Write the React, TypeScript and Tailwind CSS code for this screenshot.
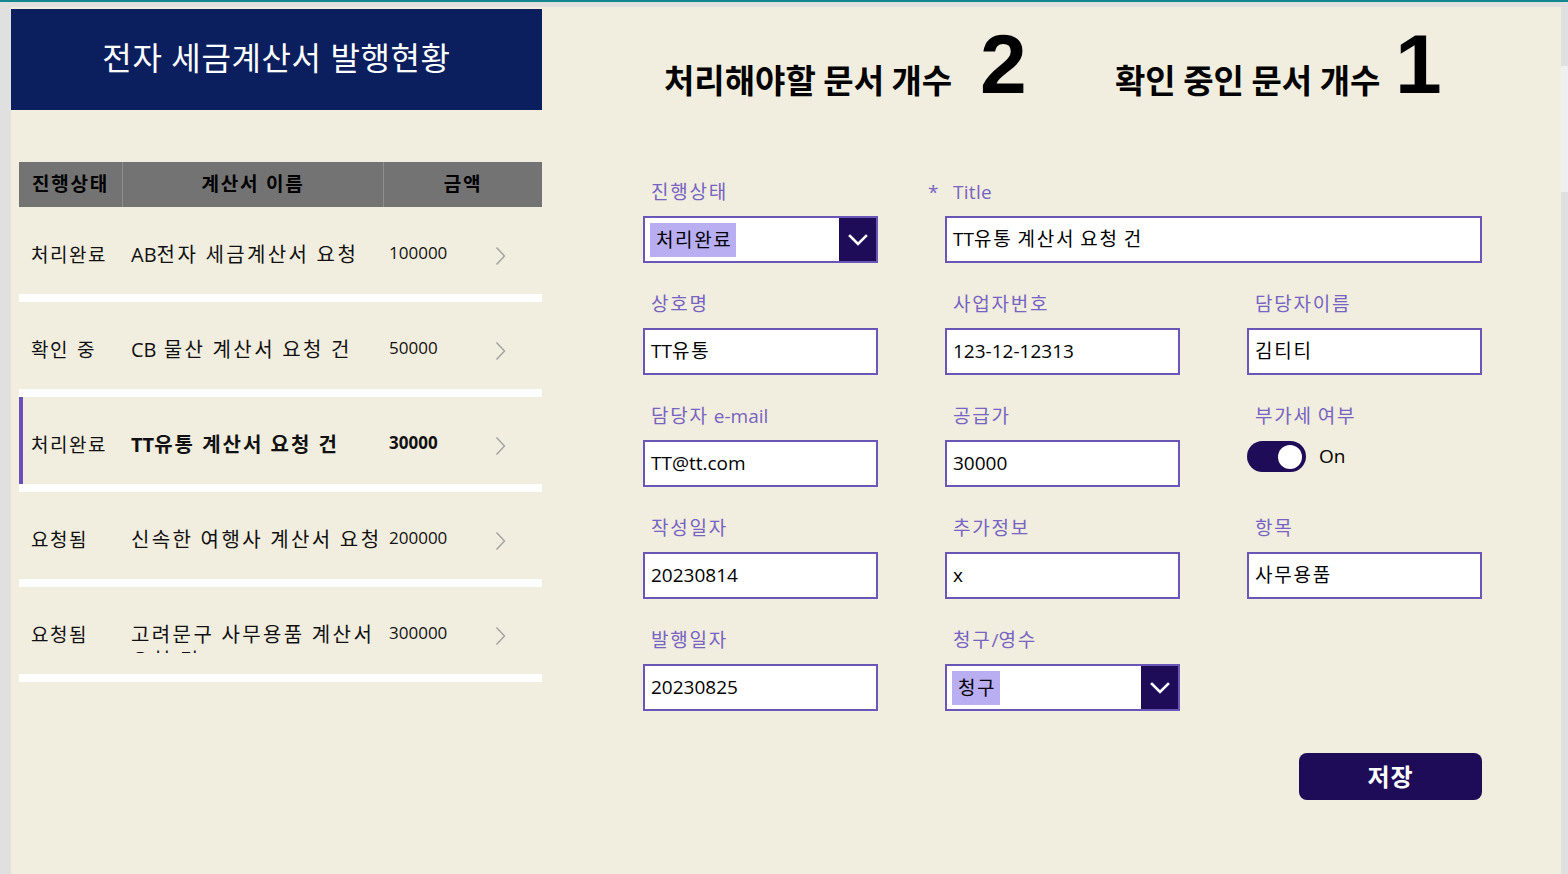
import React from "react";

const FONT = "font-['Open_Sans','Noto_Sans_CJK_KR',sans-serif]";

// Wraps Hangul runs in a span with the given (fully written) tracking class
function K({ text, k }: { text: string; k: string }) {
  const parts = text.split(/([\uAC00-\uD7A3]+)/);
  return (
    <span>
      {parts.map((p, i) =>
        /[\uAC00-\uD7A3]/.test(p) ? (
          <span key={i} className={k}>
            {p}
          </span>
        ) : (
          <React.Fragment key={i}>{p}</React.Fragment>
        )
      )}
    </span>
  );
}

function Chevron() {
  return (
    <svg width="11" height="20" viewBox="0 0 11 20" fill="none">
      <polyline points="1.5,1.5 9.5,10 1.5,18.5" stroke="#a0a0a0" strokeWidth="1.4" />
    </svg>
  );
}

function DownChevron() {
  return (
    <svg width="20" height="12" viewBox="0 0 20 12" fill="none">
      <polyline points="2,2 10,10 18,2" stroke="#ffffff" strokeWidth="2.6" strokeLinecap="square" />
    </svg>
  );
}

type Row = { status: string; name: string; amount: string; selected?: boolean };

const rows: Row[] = [
  { status: "처리완료", name: "AB전자 세금계산서 요청", amount: "100000" },
  { status: "확인 중", name: "CB 물산 계산서 요청 건", amount: "50000" },
  { status: "처리완료", name: "TT유통 계산서 요청 건", amount: "30000", selected: true },
  { status: "요청됨", name: "신속한 여행사 계산서 요청", amount: "200000" },
  { status: "요청됨", name: "고려문구 사무용품 계산서 요청 건", amount: "300000" },
];

function ListRow({ r }: { r: Row }) {
  return (
    <>
      <div
        className={
          "h-[87px] flex items-start pt-[35px] text-[#111] " +
          (r.selected ? "border-l-[4px] border-[#6a4fb8] pl-[8px]" : "pl-[12px]")
        }
      >
        <div className="w-[100px] shrink-0 whitespace-nowrap text-[19px] leading-[26px] [word-spacing:3px]">
          <K text={r.status} k="tracking-[1.5px]" />
        </div>
        <div
          className={
            "w-[258px] shrink-0 h-[31px] overflow-hidden text-[20px] leading-[26px] [word-spacing:2px] " +
            (r.selected ? "font-bold" : "")
          }
        >
          <K text={r.name} k={r.selected ? "tracking-[2px]" : "tracking-[2.4px]"} />
        </div>
        <div className={"w-[106px] shrink-0 text-[17px] leading-[26px] -mt-[2px] " + (r.selected ? "font-bold" : "")}>
          {r.amount}
        </div>
        <div className="pt-[4px]">
          <Chevron />
        </div>
      </div>
      <div className="h-[8px] bg-white" />
    </>
  );
}

function Label({ children }: { children: React.ReactNode }) {
  return (
    <div className="h-[24px] leading-[24px] text-[19px] text-[#7663c2] pl-[8px] whitespace-nowrap">{children}</div>
  );
}

function TextField({ label, value, className = "" }: { label: React.ReactNode; value: string; className?: string }) {
  return (
    <div className={"flex flex-col " + className}>
      <Label>{typeof label === "string" ? <K text={label} k="tracking-[1.8px]" /> : label}</Label>
      <div className="mt-[12px] h-[47px] border-2 border-[#6a56b6] bg-white flex items-center pl-[6px] text-[19px] text-black whitespace-nowrap">
        <K text={value} k="tracking-[1.8px]" />
      </div>
    </div>
  );
}

function DropField({ label, value }: { label: string; value: string }) {
  return (
    <div className="flex flex-col">
      <Label>
        <K text={label} k="tracking-[1.8px]" />
      </Label>
      <div className="mt-[12px] h-[47px] border-2 border-[#6a56b6] bg-white flex items-stretch">
        <div className="flex-1 flex items-center pl-[5px]">
          <span className="bg-[#b9aef2] h-[34px] leading-[34px] pl-[6px] pr-[4px] text-[19px] text-black tracking-[1.6px]">
            {value}
          </span>
        </div>
        <div className="w-[37px] bg-[#1e0c58] flex items-center justify-center">
          <DownChevron />
        </div>
      </div>
    </div>
  );
}

export default function App() {
  return (
    <div className={"w-[1568px] h-[874px] overflow-hidden bg-[#e0e0e0] flex flex-col " + FONT}>
      <div className="h-[2px] bg-[#12878c] shrink-0" />
      <div className="h-[5px] shrink-0" />
      <div className="flex flex-1 min-h-0">
        <div className="w-[11px] shrink-0" />
        <main className="w-[1550px] shrink-0 bg-[#f2eedf] flex">
          {/* Left column */}
          <section className="w-[531px] shrink-0 pt-[2px]">
            <div className="h-[101px] bg-[#0b1f5f] flex items-center justify-center pb-[4px]">
              <h1 className="text-white text-[32px] font-normal tracking-[0.6px]">전자 세금계산서 발행현황</h1>
            </div>
            <div className="ml-[8px] mt-[52px] w-[523px]">
              <div className="h-[45px] bg-[#737373] grid grid-cols-[104px_261px_158px] text-[19px] font-bold text-black tracking-[1.8px]">
                <div className="flex items-center justify-center border-r border-[#8e8e8e]">진행상태</div>
                <div className="flex items-center justify-center border-r border-[#8e8e8e]">계산서 이름</div>
                <div className="flex items-center justify-center">금액</div>
              </div>
              {rows.map((r, i) => (
                <ListRow key={i} r={r} />
              ))}
            </div>
          </section>

          {/* Right column */}
          <section className="flex-1 flex flex-col">
            <div className="h-[95px] flex items-end pl-[122px] text-black">
              <div className="w-[316px] text-[33px] font-bold font-['Noto_Sans_CJK_KR',sans-serif] leading-none pb-[6px]">
                처리해야할 문서 개수
              </div>
              <div className="w-[135px] text-[84px] font-bold font-['Liberation_Sans_Narrow','Liberation_Sans',sans-serif] leading-none -mb-[4px]">
                2
              </div>
              <div className="w-[280px] text-[33px] font-bold font-['Noto_Sans_CJK_KR',sans-serif] leading-none pb-[6px]">
                확인 중인 문서 개수
              </div>
              <div className="text-[84px] font-bold font-['Liberation_Sans_Narrow','Liberation_Sans',sans-serif] leading-none -mb-[4px]">
                1
              </div>
            </div>

            <div className="mt-[78px] pl-[101px]">
              <div className="w-[839px] grid grid-cols-[235px_235px_235px] gap-x-[67px] gap-y-[29px]">
                <DropField label="진행상태" value="처리완료" />
                <TextField
                  className="col-span-2"
                  label={
                    <span className="tracking-[0.3px]">
                      <span className="inline-block w-[25px] -ml-[25px]">*</span>Title
                    </span>
                  }
                  value="TT유통 계산서 요청 건"
                />
                <TextField label="상호명" value="TT유통" />
                <TextField label="사업자번호" value="123-12-12313" />
                <TextField label="담당자이름" value="김티티" />
                <TextField label="담당자 e-mail" value="TT@tt.com" />
                <TextField label="공급가" value="30000" />
                <div className="flex flex-col">
                  <Label>
                    <K text="부가세 여부" k="tracking-[1.8px]" />
                  </Label>
                  <div className="mt-[13px] flex items-center">
                    <div className="w-[59px] h-[31px] rounded-full bg-[#1e0c58] flex items-center justify-end pr-[4px]">
                      <div className="w-[24px] h-[24px] rounded-full bg-white" />
                    </div>
                    <span className="ml-[13px] text-[19px] text-black">On</span>
                  </div>
                </div>
                <TextField label="작성일자" value="20230814" />
                <TextField label="추가정보" value="x" />
                <TextField label="항목" value="사무용품" />
                <TextField label="발행일자" value="20230825" />
                <DropField label="청구/영수" value="청구" />
                <div />
              </div>
              <div className="w-[839px] flex justify-end mt-[42px]">
                <button className="w-[183px] h-[47px] rounded-[8px] bg-[#1e0c58] text-white text-[24px] font-bold tracking-[1px]">
                  저장
                </button>
              </div>
            </div>
          </section>
        </main>
        <div className="w-[7px] shrink-0 flex flex-col">
          <div className="h-[59px]" />
          <div className="h-[126px] bg-[#efefef]" />
        </div>
      </div>
    </div>
  );
}
